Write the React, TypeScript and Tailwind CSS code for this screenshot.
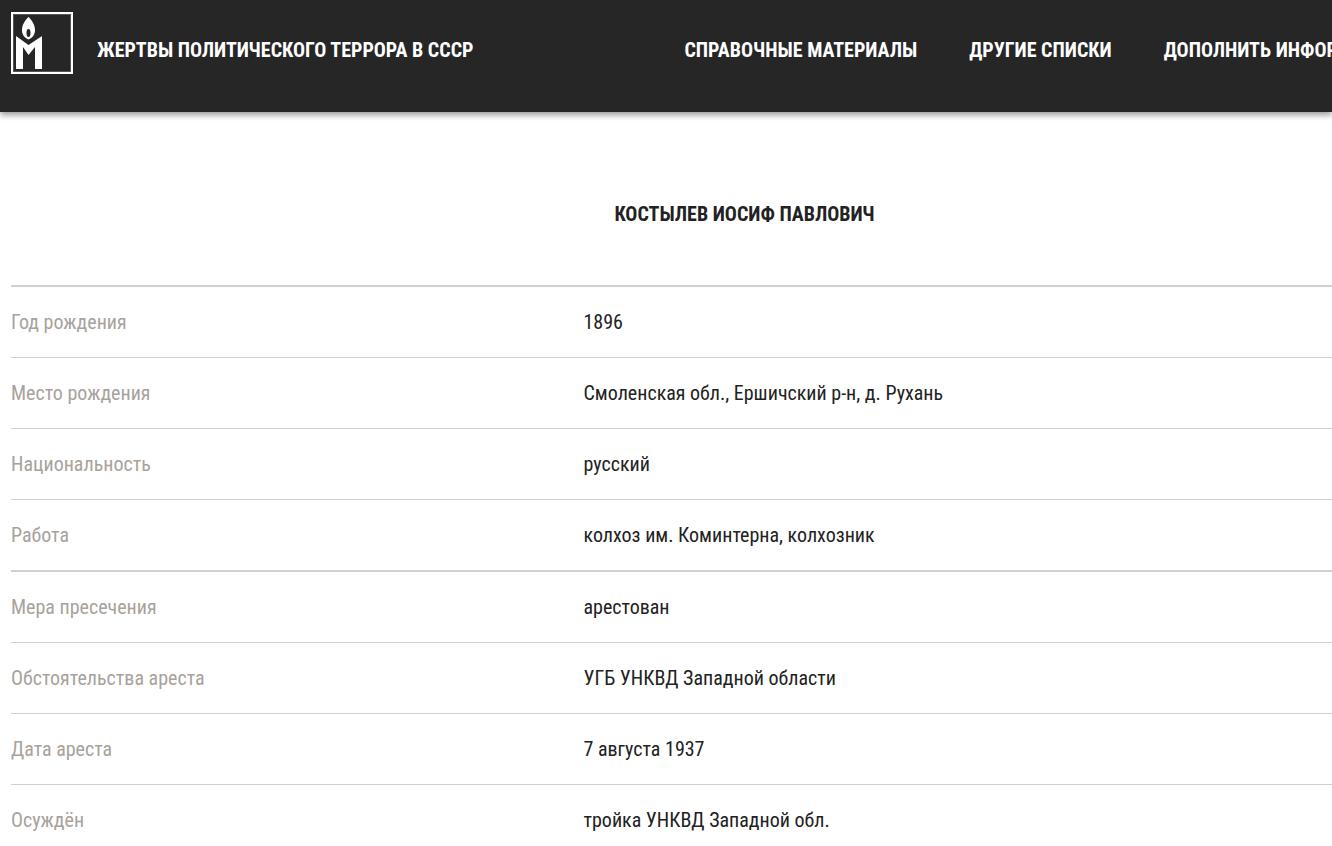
const font = "font-['Roboto_Condensed','Roboto','Liberation_Sans',sans-serif]"

const firstGroup = [
  ['Год рождения', '1896'],
  ['Место рождения', 'Смоленская обл., Ершичский р-н, д. Рухань'],
  ['Национальность', 'русский'],
  ['Работа', 'колхоз им. Коминтерна, колхозник'],
]

const secondGroup = [
  ['Мера пресечения', 'арестован'],
  ['Обстоятельства ареста', 'УГБ УНКВД Западной области'],
  ['Дата ареста', '7 августа 1937'],
  ['Осуждён', 'тройка УНКВД Западной обл.'],
]

function Logo() {
  return (
    <div className="w-[62px] h-[62px] shrink-0 border-2 border-white outline outline-1 -outline-offset-3 outline-[#555]">
      <svg width="58" height="58" viewBox="0 0 58 58">
        <path
          fillRule="evenodd"
          fill="#fff"
          d="M15.5 3 C19 6.5 22 11 22 16 C22 20.5 19.5 24 15.5 25.5 C11.5 24 9 20.5 9 16 C9 11 12 6.5 15.5 3 Z M15.5 15 C14.2 15 13.5 16.5 13.5 19 C13.5 21.5 14.2 23 15.5 23 C16.8 23 17.5 21.5 17.5 19 C17.5 16.5 16.8 15 15.5 15 Z"
        />
        <path fill="#fff" d="M3 22 L15.5 31 L29 22 L29 55 L22 55 L22 33 L15.5 41 L10 33 L10 55 L3 55 Z" />
      </svg>
    </div>
  )
}

function Row({ label, value, thick }: { label: string; value: string; thick?: boolean }) {
  return (
    <div className={`flex items-center border-[#d0d0d0] ${thick ? 'h-[72px] border-t-2' : 'h-[71px] border-t'}`}>
      <div className="w-[572.5px] shrink-0 text-[20px] text-[#a8a29c] [font-stretch:75%]">{label}</div>
      <div className="text-[20px] text-[#222] whitespace-nowrap [font-stretch:75%]">{value}</div>
    </div>
  )
}

export default function App() {
  return (
    <div className={`${font} h-[846px] w-[1332px] overflow-hidden bg-white`}>
      <header className="h-[112px] bg-[#262626] shadow-[0_3px_6px_rgba(0,0,0,0.4)] flex items-start pl-[11px] pt-[12px] whitespace-nowrap text-white font-bold text-[20px] leading-[24px] [font-stretch:75%]">
        <Logo />
        <span className="ml-6 mt-[26px]">ЖЕРТВЫ ПОЛИТИЧЕСКОГО ТЕРРОРА В СССР</span>
        <nav className="flex gap-[52px] ml-[211px] mt-[26px]">
          <a>СПРАВОЧНЫЕ МАТЕРИАЛЫ</a>
          <a>ДРУГИЕ СПИСКИ</a>
          <a>ДОПОЛНИТЬ ИНФОРМАЦИЮ</a>
        </nav>
      </header>

      <main className="pl-[11px]">
        <h1 className="h-[173px] flex items-center justify-center pl-[146px] pt-[30px] text-[20px] font-bold text-[#222] [font-stretch:75%]">
          КОСТЫЛЕВ ИОСИФ ПАВЛОВИЧ
        </h1>
        {firstGroup.map(([label, value], i) => (
          <Row key={label} label={label} value={value} thick={i === 0} />
        ))}
        {secondGroup.map(([label, value], i) => (
          <Row key={label} label={label} value={value} thick={i === 0} />
        ))}
      </main>
    </div>
  )
}
